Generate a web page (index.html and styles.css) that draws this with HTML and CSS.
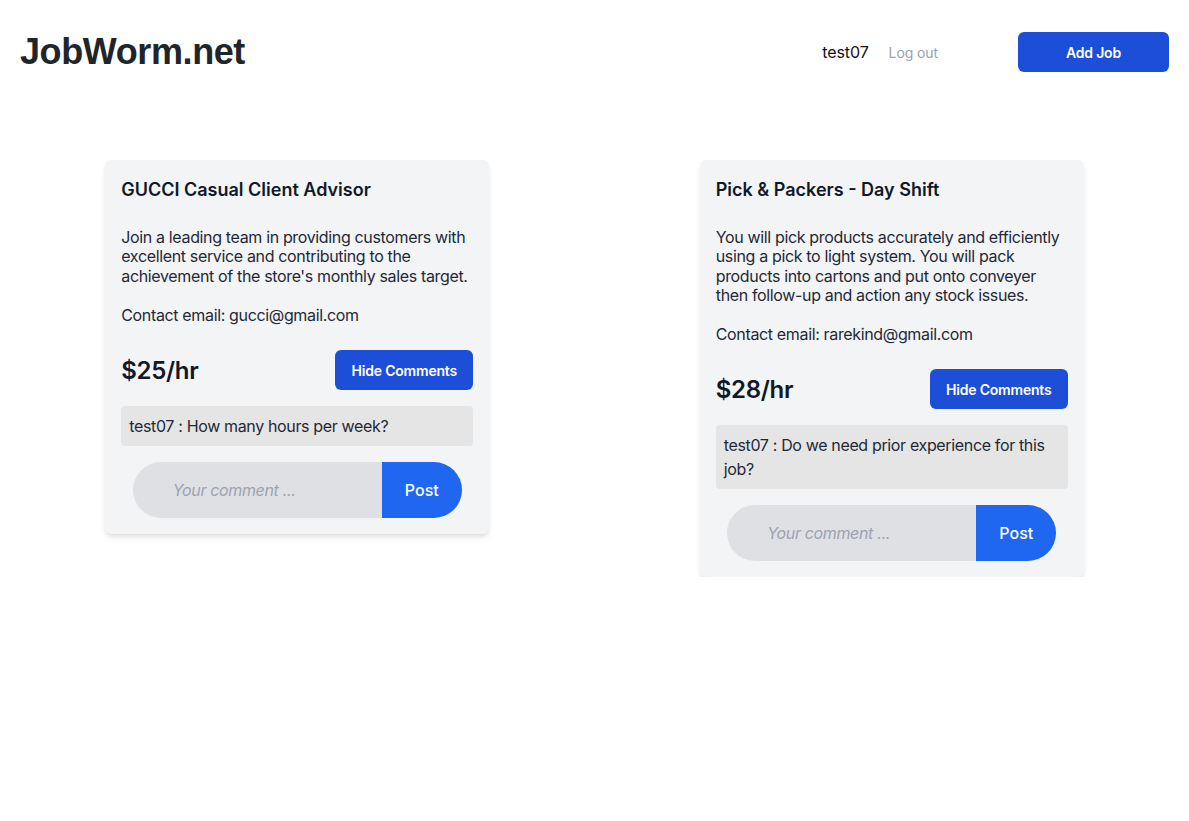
FILE: index.html
```html
<!DOCTYPE html>
<html>
<head>
<meta charset="utf-8">
<link rel="stylesheet" href="styles.css">
</head>
<body>
<header class="header">
  <h1 class="logo">JobWorm.net</h1>
  <nav class="nav">
    <span class="user">test07</span>
    <a class="logout">Log out</a>
    <button class="add-job">Add Job</button>
  </nav>
</header>
<main class="grid">
  <section class="col">
    <article class="card">
      <h2 class="title">GUCCI Casual Client Advisor</h2>
      <p class="desc">Join a leading team in providing customers with excellent service and contributing to the achievement of the store's monthly sales target.

Contact email: gucci@gmail.com</p>
      <div class="row">
        <span class="price">$25/hr</span>
        <button class="toggle">Hide Comments</button>
      </div>
      <div class="comment">test07 : How many hours per week?</div>
      <form class="form">
        <input class="input" placeholder="Your comment ...">
        <button class="post" type="button">Post</button>
      </form>
    </article>
  </section>
  <section class="col">
    <article class="card">
      <h2 class="title">Pick &amp; Packers - Day Shift</h2>
      <p class="desc">You will pick products accurately and efficiently using a pick to light system. You will pack products into cartons and put onto conveyer then follow-up and action any stock issues.

Contact email: rarekind@gmail.com</p>
      <div class="row">
        <span class="price">$28/hr</span>
        <button class="toggle">Hide Comments</button>
      </div>
      <div class="comment">test07 : Do we need prior experience for this job?</div>
      <form class="form">
        <input class="input" placeholder="Your comment ...">
        <button class="post" type="button">Post</button>
      </form>
    </article>
  </section>
</main>
</body>
</html>
```

FILE: styles.css
```css
* { box-sizing: border-box; }
body {
  margin: 0;
  font-family: Inter, "Noto Sans", sans-serif;
  color: #111827;
  background: #fff;
}
.header {
  display: flex;
  align-items: center;
  justify-content: space-between;
  padding: 32px 20px 32px 20px;
  height: 104px;
}
.logo {
  margin: 0;
  font-family: "Liberation Sans", Arial, sans-serif;
  font-weight: 700;
  font-size: 36px;
  color: #212529;
  letter-spacing: -0.4px;
}
.nav {
  display: flex;
  align-items: center;
}
.user {
  font-size: 16px;
  color: #111;
  letter-spacing: -0.1px;
}
.logout {
  margin-left: 20px;
  font-size: 14px;
  color: #9ca3af;
  letter-spacing: -0.1px;
}
.add-job {
  margin-left: 80px;
  width: 151px;
  height: 40px;
  border: none;
  border-radius: 6px;
  background: #1d4ed8;
  color: #fff;
  font-family: Inter, sans-serif;
  font-weight: 600;
  font-size: 14px;
  letter-spacing: -0.2px;
}
.grid {
  display: grid;
  grid-template-columns: 1fr 1fr;
  align-items: start;
  margin-top: 56px;
}
.col {
  display: flex;
  justify-content: center;
}
.card {
  width: 384px;
  background: #f3f4f6;
  border-radius: 6px;
  box-shadow: 0 4px 6px -1px rgba(0,0,0,0.1), 0 2px 4px -2px rgba(0,0,0,0.1);
  padding: 16px;
}
.title {
  margin: 0 0 24px 0;
  font-size: 18px;
  line-height: 28px;
  font-weight: 600;
  color: #111827;
  letter-spacing: 0;
}
.desc {
  margin: 0;
  white-space: pre-line;
  font-size: 16px;
  line-height: 19.4px;
  color: #1f2937;
  letter-spacing: -0.35px;
}
.row {
  margin-top: 25px;
  display: flex;
  align-items: center;
  justify-content: space-between;
}
.price {
  font-size: 24px;
  font-weight: 600;
  color: #111827;
  letter-spacing: -0.3px;
}
.toggle {
  width: 138px;
  height: 40px;
  border: none;
  border-radius: 6px;
  background: #1d4ed8;
  color: #fff;
  font-family: Inter, sans-serif;
  font-weight: 600;
  font-size: 14px;
  letter-spacing: -0.2px;
}
.comment {
  margin-top: 16px;
  background: #e5e5e5;
  border-radius: 4px;
  padding: 8px;
  font-size: 16px;
  line-height: 24px;
  color: #1f2937;
  letter-spacing: -0.35px;
}
.form {
  margin: 16px auto 0 auto;
  display: flex;
  width: 329px;
  height: 56px;
}
.input {
  width: 249px;
  border: none;
  background: #dfe0e3;
  border-radius: 28px 0 0 28px;
  padding: 0 0 0 40px;
  font-family: Inter, sans-serif;
  font-size: 16px;
  font-style: italic;
  letter-spacing: -0.35px;
  outline: none;
}
.input::placeholder {
  color: #9ca3af;
}
.post {
  width: 80px;
  border: none;
  background: #1f67f1;
  color: #fff;
  border-radius: 0 28px 28px 0;
  font-family: Inter, sans-serif;
  font-weight: 500;
  font-size: 16px;
}
```
